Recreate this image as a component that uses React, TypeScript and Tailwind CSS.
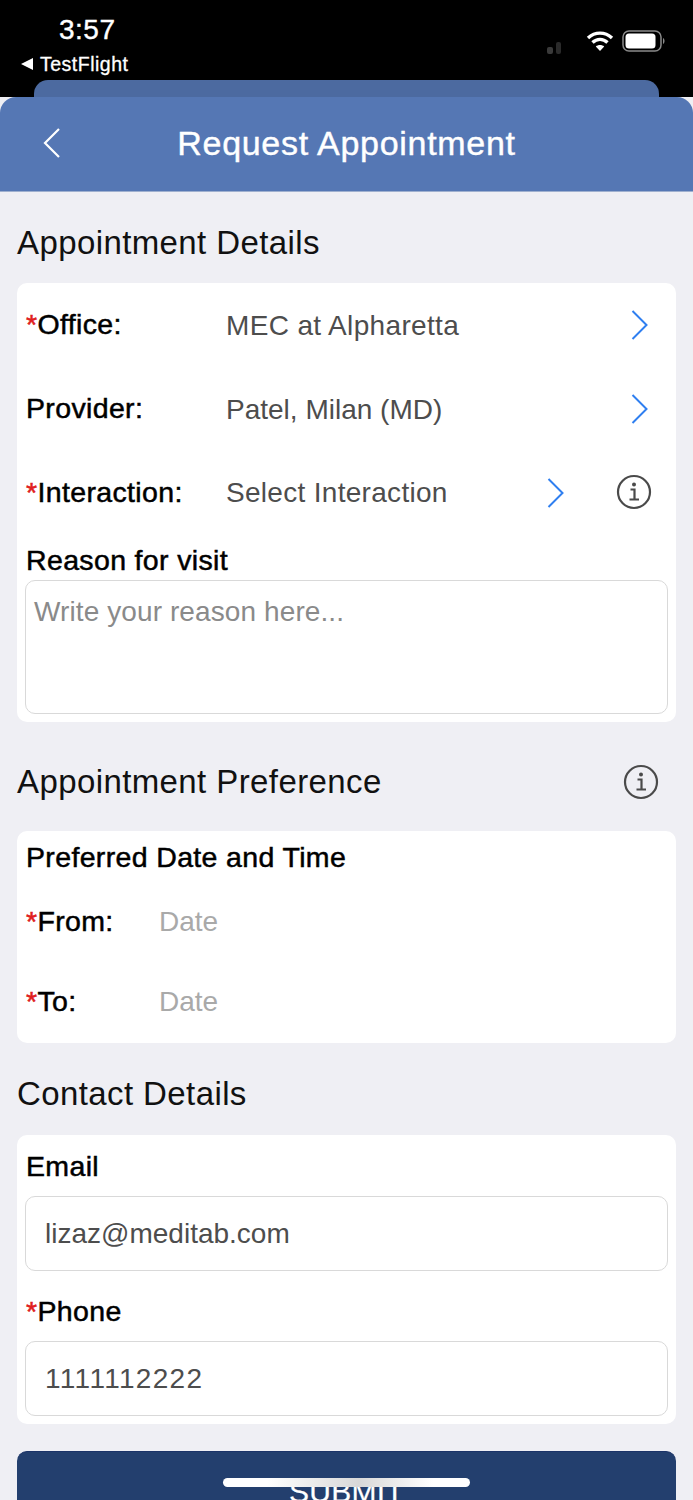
import React from "react";

const Chevron = ({ className = "" }: { className?: string }) => (
  <svg width="18" height="32" viewBox="0 0 18 32" fill="none" className={className}>
    <path d="M1.5 2 L15.5 16 L1.5 30" stroke="#2f7ff0" strokeWidth="2" />
  </svg>
);

const Info = ({ className = "" }: { className?: string }) => (
  <svg width="36" height="36" viewBox="0 0 36 36" fill="none" className={className}>
    <circle cx="18" cy="18" r="16" stroke="#4a4a4a" strokeWidth="2.2" />
    <circle cx="18" cy="10.5" r="2" fill="#4a4a4a" />
    <path d="M14.5 15.5 H18.5 V25.5 M13.5 25.5 H23" stroke="#4a4a4a" strokeWidth="2.2" />
  </svg>
);

const Label = ({ text, req }: { text: string; req?: boolean }) => (
  <span className="text-[28.5px] leading-[34px] tracking-[0.35px] text-black [-webkit-text-stroke:0.5px_black] whitespace-nowrap">
    {req && <span className="text-[#e02020] [-webkit-text-stroke:0.5px_#e02020]">*</span>}
    {text}
  </span>
);

const Title = ({ text }: { text: string }) => (
  <h2 className="text-[33px] leading-[38px] tracking-[0.4px] font-normal text-[#111111] whitespace-nowrap">{text}</h2>
);

const SelectRow = ({
  label,
  value,
  req,
  height,
  extra,
  track,
}: {
  label: string;
  value: string;
  req?: boolean;
  height: string;
  extra?: boolean;
  track: string;
}) => (
  <div className={`flex items-center pl-[9px] ${height}`}>
    <div className="w-[200px] shrink-0 pb-[2px]">
      <Label text={label} req={req} />
    </div>
    <span className={`flex-1 text-[28px] pt-[1px] text-[#4d4d4d] whitespace-nowrap ${track}`}>{value}</span>
    {extra ? (
      <div className="flex items-center mr-[24px]">
        <Chevron className="mr-[51px]" />
        <Info className="mb-[2px]" />
      </div>
    ) : (
      <Chevron className="mr-[27px]" />
    )}
  </div>
);

const DateRow = ({ label, height }: { label: string; height: string }) => (
  <div className={`flex items-center pl-[9px] ${height}`}>
    <div className="w-[133px] shrink-0">
      <Label text={label} req />
    </div>
    <span className="text-[28px] pt-[1px] text-[#a9a9a9]">Date</span>
  </div>
);

const Field = ({ value, track = "" }: { value: string; track?: string }) => (
  <div className={`mx-[8px] h-[75px] flex items-center pl-[19px] pt-[1px] bg-white border border-[#d9d9d9] rounded-[10px] text-[28px] text-[#4d4d4d] ${track}`}>
    {value}
  </div>
);

export default function App() {
  return (
    <div className="relative w-[693px] h-[1500px] overflow-hidden bg-[#efeff4] font-['Liberation_Sans',Arial,sans-serif]">
      <div className="h-[97px] bg-black text-white relative">
        <div className="flex justify-between">
          <div className="pl-[21px]">
            <div className="pl-[38px] pt-[13px] text-[28px] leading-[34px] tracking-[0.5px] [-webkit-text-stroke:0.4px_white]">3:57</div>
            <div className="flex items-center gap-[7px] text-[19.5px] leading-[24px] tracking-[0.5px] mt-[5px] [-webkit-text-stroke:0.3px_white]">
              <svg width="12" height="12" viewBox="0 0 12 12"><path d="M12 0 V12 L0 6 Z" fill="white" /></svg>
              TestFlight
            </div>
          </div>
          <div className="flex items-start pt-[30px] pr-[27px]">
            <svg width="16" height="12" viewBox="0 0 16 12" className="mr-[24px] mt-[12px]">
              <rect x="1" y="5" width="6" height="7" rx="2" fill="#3a3a3a" />
              <rect x="10" y="0" width="5" height="12" rx="2" fill="#2a2a2a" />
            </svg>
            <svg width="28" height="22" viewBox="0 0 28 22" className="mr-[8px]" fill="none">
              <path d="M2 8 C9 1.5 19 1.5 26 8" stroke="white" strokeWidth="3.4" />
              <path d="M6.5 12.5 C11 8.3 17 8.3 21.5 12.5" stroke="white" strokeWidth="3.4" />
              <path d="M14 21 L9.8 16.6 C12 14.6 16 14.6 18.2 16.6 Z" fill="white" />
            </svg>
            <svg width="44" height="22" viewBox="0 0 44 22" fill="none">
              <rect x="1" y="1" width="38" height="20" rx="6" stroke="#8a8a8a" strokeWidth="1.5" />
              <rect x="3.5" y="3.5" width="30" height="15" rx="3.5" fill="white" />
              <path d="M41 8 C43 9 43 13 41 14 Z" fill="#8a8a8a" />
            </svg>
          </div>
        </div>
        <div className="absolute left-[34px] right-[34px] top-[80px] h-[17px] bg-[#4c6aa0] rounded-t-[14px]" />
      </div>

      <div className="relative h-[95px] bg-[#5577b4] rounded-t-[16px] flex items-center justify-center border-b border-[#9fb0cf]">
        <svg width="18" height="32" viewBox="0 0 18 32" fill="none" className="absolute left-[43px] top-[30px]">
          <path d="M16 2 L2 16 L16 30" stroke="white" strokeWidth="2.2" />
        </svg>
        <h1 className="text-[34px] leading-[40px] mt-[-2px] tracking-[0.7px] text-white [-webkit-text-stroke:0.4px_white]">Request Appointment</h1>
      </div>

      <div className="px-[17px]">
        <div className="h-[91px] flex items-center pt-[10px]">
          <Title text="Appointment Details" />
        </div>

        <section className="bg-white rounded-[10px] h-[439px]">
          <SelectRow label="Office:" value="MEC at Alpharetta" req height="h-[84px]" track="tracking-[0.35px]" />
          <SelectRow label="Provider:" value="Patel, Milan (MD)" height="h-[84px]" track="tracking-[0px]" />
          <SelectRow label="Interaction:" value="Select Interaction" req height="h-[83px]" extra track="tracking-[0.3px]" />
          <div className="pl-[9px] h-[46px] pt-[9px]">
            <Label text="Reason for visit" />
          </div>
          <div className="mx-[8px] h-[134px] border border-[#d9d9d9] rounded-[10px] px-[8px] pt-[14px] text-[28px] leading-[34px] tracking-[0.1px] text-[#8a8a8a]">
            Write your reason here...
          </div>
        </section>

        <div className="h-[109px] flex items-center justify-between pr-[17px] pt-[10px]">
          <Title text="Appointment Preference" />
          <Info />
        </div>

        <section className="bg-white rounded-[10px] h-[212px]">
          <div className="pl-[9px] h-[50px] pt-[9px]">
            <Label text="Preferred Date and Time" />
          </div>
          <DateRow label="From:" height="h-[80px]" />
          <DateRow label="To:" height="h-[80px]" />
        </section>

        <div className="h-[92px] flex items-center pt-[10px]">
          <Title text="Contact Details" />
        </div>

        <section className="bg-white rounded-[10px] h-[289px]">
          <div className="pl-[9px] h-[61px] pt-[14px]">
            <Label text="Email" />
          </div>
          <Field value="lizaz@meditab.com" />
          <div className="pl-[9px] h-[70px] pt-[23px]">
            <Label text="Phone" req />
          </div>
          <Field value="1111112222" track="tracking-[1.3px]" />
        </section>

        <button className="mt-[27px] w-full h-[80px] bg-[#233f6e] border-t border-[#1b3368] rounded-[10px] text-white text-[30px] tracking-[0.3px] flex items-center justify-center [-webkit-text-stroke:0.2px_white]">
          SUBMIT
        </button>
      </div>

      <div className="absolute left-[223px] top-[1478px] w-[247px] h-[9px] rounded-full bg-[linear-gradient(90deg,#ffffff_18%,#d8d8d8_55%,#ffffff_85%)]" />
    </div>
  );
}
